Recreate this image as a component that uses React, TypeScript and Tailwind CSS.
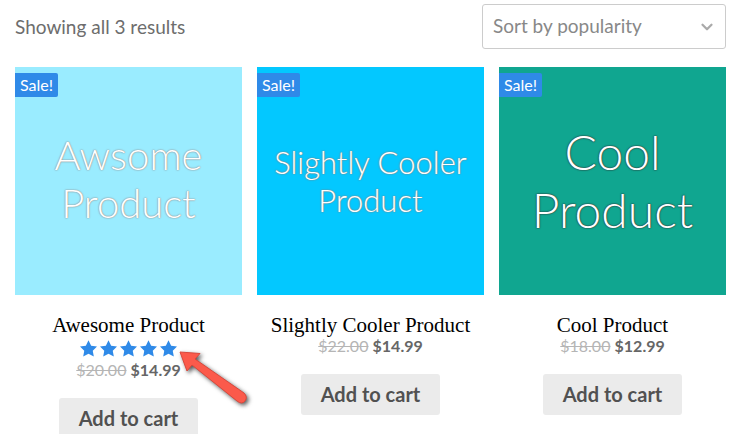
import React from "react";
import { ChevronDown } from "lucide-react";

type Product = {
  name: string;
  artLines: string[];
  artClass: string;
  oldPrice: string;
  price: string;
  rating?: number;
};

const products: Product[] = [
  {
    name: "Awesome Product",
    artLines: ["Awsome", "Product"],
    artClass:
      "bg-[#9aecff] pb-1 text-[40px] leading-[48px] [text-shadow:0_0_1px_#888,0_0_2px_#999]",
    oldPrice: "$20.00",
    price: "$14.99",
    rating: 5,
  },
  {
    name: "Slightly Cooler Product",
    artLines: ["Slightly Cooler", "Product"],
    artClass:
      "bg-[#03c8ff] text-[31px] leading-[38px] [text-shadow:0_0_1px_#777,0_0_2px_#888]",
    oldPrice: "$22.00",
    price: "$14.99",
  },
  {
    name: "Cool Product",
    artLines: ["Cool", "Product"],
    artClass:
      "bg-[#10a690] text-[48px] leading-[58px] [text-shadow:0_0_1px_#222,0_0_2px_#333]",
    oldPrice: "$18.00",
    price: "$12.99",
  },
];

function Stars({ count }: { count: number }) {
  return (
    <div role="img" aria-label={`Rated ${count} out of 5`} className="flex h-6 items-center justify-center gap-[3px]">
      {Array.from({ length: count }, (_, i) => (
        <svg key={i} viewBox="0 0 16 16" className="size-[17px] fill-[#2f8ae8]">
          <path d="M8 0.3 10.5 5.3 16 6.1 12 10 13 15.5 8 12.9 3 15.5 4 10 0 6.1 5.5 5.3Z" />
        </svg>
      ))}
    </div>
  );
}

function PointerArrow() {
  return (
    <svg
      aria-hidden="true"
      viewBox="0 0 72 60"
      className="absolute top-[280px] left-[163px] z-10 h-[60px] w-[72px] drop-shadow-[2px_2px_2px_rgba(0,0,0,0.65)]"
    >
      <path
        d="M2 5 22 6.500 17 12 66 46Q70 50 67 54Q64 58 59 54L14 18 9 24Z"
        fill="#fb5a4b"
        stroke="#d9483c"
        strokeWidth="1"
        strokeLinejoin="round"
      />
    </svg>
  );
}

function ProductCard({ product }: { product: Product }) {
  return (
    <li className="relative flex flex-col items-center">
      <div
        className={`flex aspect-[227/228] w-full flex-col items-center justify-center text-center font-[Lato,sans-serif] font-light whitespace-nowrap text-white ${product.artClass}`}
      >
        {product.artLines.map((line) => (
          <span key={line}>{line}</span>
        ))}
      </div>
      <span className="absolute top-[6px] left-0 rounded-r-xs bg-[#2f8ae8] px-[5px] text-base leading-6 text-white">
        Sale!
      </span>
      <h2 className="mt-5 font-['Liberation_Serif',serif] text-[21px] leading-[21px] whitespace-nowrap text-black">
        {product.name}
      </h2>
      {product.rating && <Stars count={product.rating} />}
      <p className="text-base leading-5 text-[#666]">
        <del className="text-[#b5b5b5]">{product.oldPrice}</del>{" "}
        <ins className="font-bold no-underline">{product.price}</ins>
      </p>
      <button
        type="button"
        className="mt-[18px] rounded-[3px] bg-[#ebebeb] px-5 text-[20px] leading-[41px] font-bold text-[#515151]"
      >
        Add to cart
      </button>
      {product.rating && <PointerArrow />}
    </li>
  );
}

export default function App() {
  return (
    <main className="h-screen overflow-hidden bg-white pt-1 pr-[19px] pl-[15px] font-[Lato,sans-serif]">
      <div className="flex items-start justify-between">
        <p className="text-[19px] leading-[45px] text-[#6d6d6d]">Showing all 3 results</p>
        <div className="relative w-[244px]">
          <select
            aria-label="Shop order"
            className="block h-[45px] w-full appearance-none rounded-[3px] border border-[#ccc] bg-white px-[10px] text-[19px] text-[#888]"
          >
            <option>Sort by popularity</option>
          </select>
          <ChevronDown
            aria-hidden="true"
            className="pointer-events-none absolute top-[14px] right-[10px] size-[18px] stroke-[3] text-[#aaa]"
          />
        </div>
      </div>
      <ul className="mt-[18px] grid grid-cols-3 gap-[15px]">
        {products.map((product) => (
          <ProductCard key={product.name} product={product} />
        ))}
      </ul>
    </main>
  );
}
